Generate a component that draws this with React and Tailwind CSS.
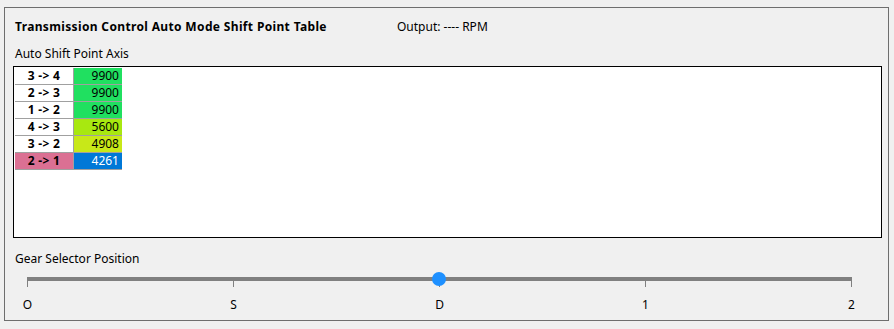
import React from 'react';

const rows = [
  { label: '3 -> 4', value: 9900, color: 'bg-[#20e060]' },
  { label: '2 -> 3', value: 9900, color: 'bg-[#20e060]' },
  { label: '1 -> 2', value: 9900, color: 'bg-[#20e060]' },
  { label: '4 -> 3', value: 5600, color: 'bg-[#a8e810]' },
  { label: '3 -> 2', value: 4908, color: 'bg-[#c8e818]' },
  { label: '2 -> 1', value: 4261, color: 'bg-[#0078d7]', selected: true },
];

const ticks = ['O', 'S', 'D', '1', '2'];

const App = () => {
  return (
    <div className="w-[894px] h-[329px] bg-[#f0f0f0] pt-[7px] pl-[4px] text-[12px] text-black" style={{ fontFamily: '"Noto Sans", "Open Sans", sans-serif' }}>
      <div className="w-[885px] h-[314px] border border-[#6e6e6e] flex flex-col">
        {/* Header */}
        <div className="flex items-center h-[34px] pt-[3px] pl-[10px]">
          <span className="font-bold w-[382px] tracking-[0.35px]">Transmission Control Auto Mode Shift Point Table</span>
          <span>Output: ---- RPM</span>
        </div>

        <div className="pl-[10px] h-[24px] pt-[3px] leading-[18px]">Auto Shift Point Axis</div>

        {/* Table box */}
        <div className="ml-[8px] w-[869px] h-[172px] border border-black bg-white p-[1px]">
          <div className="flex flex-col w-[107px]">
            {rows.map((row, i) => (
              <div key={i} className="flex h-[17px] border-b border-[#a0a0a0]">
                <div className={`w-[59px] border-r border-[#a0a0a0] flex items-center justify-center font-bold leading-none tracking-[0.3px] ${row.selected ? 'bg-[#db7093]' : 'bg-white'}`}>
                  {row.label}
                </div>
                <div className={`flex-1 flex items-center justify-end pr-[3px] leading-none ${row.color} ${row.selected ? 'text-white' : 'text-black'}`}>
                  {row.value}
                </div>
              </div>
            ))}
          </div>
        </div>

        <div className="pl-[10px] mt-[11px] h-[20px] leading-[20px]">Gear Selector Position</div>

        {/* Slider */}
        <div className="relative ml-[22px] w-[825px] h-[40px]">
          <div className="absolute left-0 right-0 top-[8px] h-[4px] bg-[#808080]" />
          <div className="absolute left-0 right-0 top-[12px] flex justify-between">
            {ticks.map((t) => (
              <div key={t} className="w-[1px] h-[6px] bg-[#808080]" />
            ))}
          </div>
          <div className="absolute top-[3px] left-[405px] w-[14px] h-[14px] rounded-full bg-[#1e90ff]" />
          <div className="absolute left-0 right-0 top-[30px] flex justify-between">
            {ticks.map((t) => (
              <div key={t} className="w-[1px] flex justify-center">
                <span className="leading-none">{t}</span>
              </div>
            ))}
          </div>
        </div>
      </div>
    </div>
  );
};

export default App;
